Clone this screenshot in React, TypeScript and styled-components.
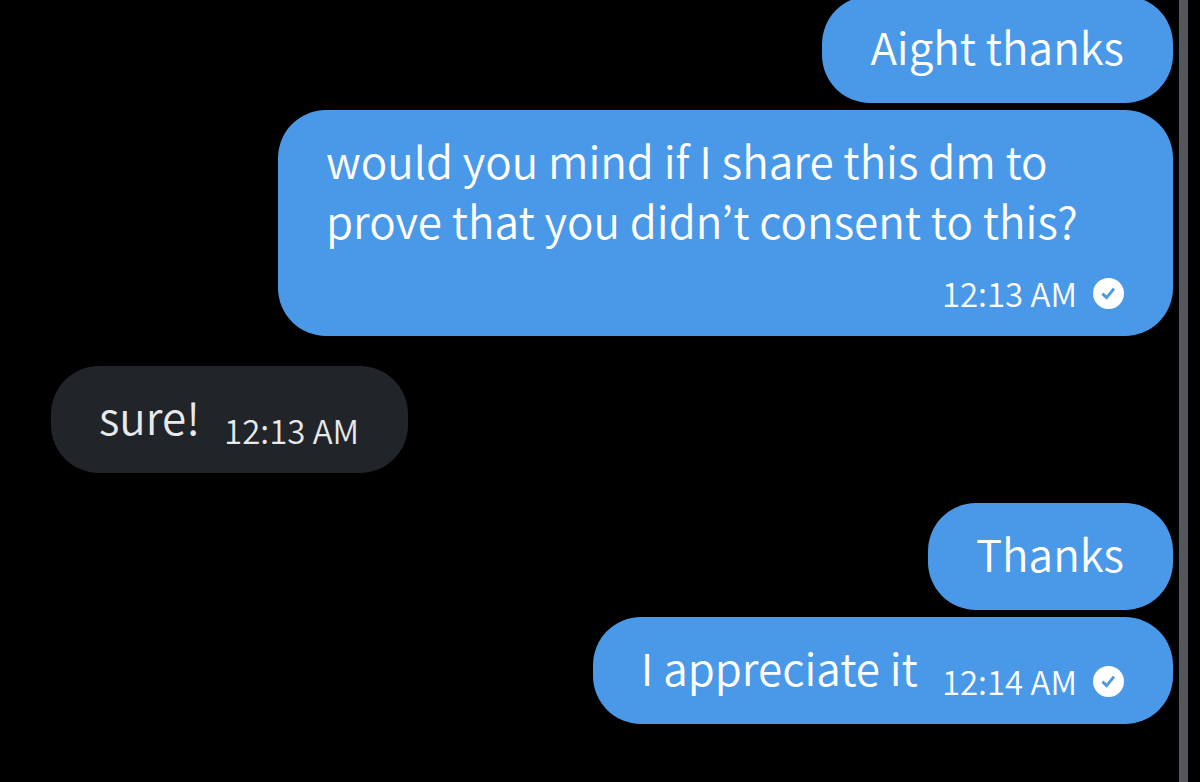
import React from "react";
import styled, { createGlobalStyle } from "styled-components";

const GlobalStyle = createGlobalStyle`
  * { box-sizing: border-box; }
  body {
    margin: 0;
    background: #000;
    font-family: "Noto Sans CJK KR", "Open Sans", sans-serif;
    font-weight: 350;
  }
`;

const Screen = styled.div`
  display: flex;
  height: 100vh;
  padding-right: 12px;
  overflow: hidden;
  background: #000;
`;

const Thread = styled.main`
  flex: 1;
  min-width: 0;
  display: flex;
  flex-direction: column;
  justify-content: flex-end;
  gap: 30px;
  padding: 0 6px 58px 51px;
`;

const ScrollRail = styled.div`
  flex: none;
  width: 9px;
  background: #53575b;
`;

const Group = styled.section<{ $sent?: boolean }>`
  flex: none;
  display: flex;
  flex-direction: column;
  align-items: ${(p) => (p.$sent ? "flex-end" : "flex-start")};
  gap: 7px;
  padding-left: ${(p) => (p.$sent ? "227px" : "0")};
`;

const Bubble = styled.article<{ $sent?: boolean; $stacked?: boolean }>`
  display: flex;
  flex-direction: ${(p) => (p.$stacked ? "column" : "row")};
  align-items: flex-end;
  column-gap: 24px;
  padding: 20px 49px 23px 48px;
  border-radius: 48px;
  background: ${(p) => (p.$sent ? "#4a99e9" : "#212429")};
  color: ${(p) => (p.$sent ? "#fff" : "#e7e9ea")};
`;

const Text = styled.p<{ $fill?: boolean }>`
  margin: 0;
  padding-bottom: 4px;
  width: ${(p) => (p.$fill ? "100%" : "auto")};
  font-size: 44px;
  line-height: 60px;
`;

const Meta = styled.div<{ $below?: boolean }>`
  flex: none;
  display: flex;
  align-items: center;
  gap: 16px;
  margin-top: ${(p) => (p.$below ? "19px" : "0")};
  font-size: 33px;
  line-height: 40px;
  white-space: nowrap;
`;

const CheckIcon = styled.svg`
  display: block;
  width: 31px;
  height: 31px;
`;

type Message = { text: string; time?: string; stacked?: boolean };
type MessageGroup = { sent?: boolean; messages: Message[] };

const groups: MessageGroup[] = [
  {
    sent: true,
    messages: [
      { text: "Aight thanks" },
      {
        text: "would you mind if I share this dm to prove that you didn’t consent to this?",
        time: "12:13 AM",
        stacked: true,
      },
    ],
  },
  { messages: [{ text: "sure!", time: "12:13 AM" }] },
  {
    sent: true,
    messages: [{ text: "Thanks" }, { text: "I appreciate it", time: "12:14 AM" }],
  },
];

function Delivered() {
  return (
    <CheckIcon viewBox="0 0 31 31" role="img" aria-label="Delivered">
      <circle cx="15.5" cy="15.5" r="15.5" fill="#fff" />
      <path d="M9.4 15.6 L13.6 19.6 L21 10.6" fill="none" stroke="#4a99e9" strokeWidth="2.9" />
    </CheckIcon>
  );
}

export default function App() {
  return (
    <Screen>
      <GlobalStyle />
      <Thread>
        {groups.map((group, i) => (
          <Group key={i} $sent={group.sent}>
            {group.messages.map((m) => (
              <Bubble key={m.text} $sent={group.sent} $stacked={m.stacked}>
                <Text $fill={m.stacked}>{m.text}</Text>
                {m.time && (
                  <Meta $below={m.stacked}>
                    <time>{m.time}</time>
                    {group.sent && <Delivered />}
                  </Meta>
                )}
              </Bubble>
            ))}
          </Group>
        ))}
      </Thread>
      <ScrollRail />
    </Screen>
  );
}
